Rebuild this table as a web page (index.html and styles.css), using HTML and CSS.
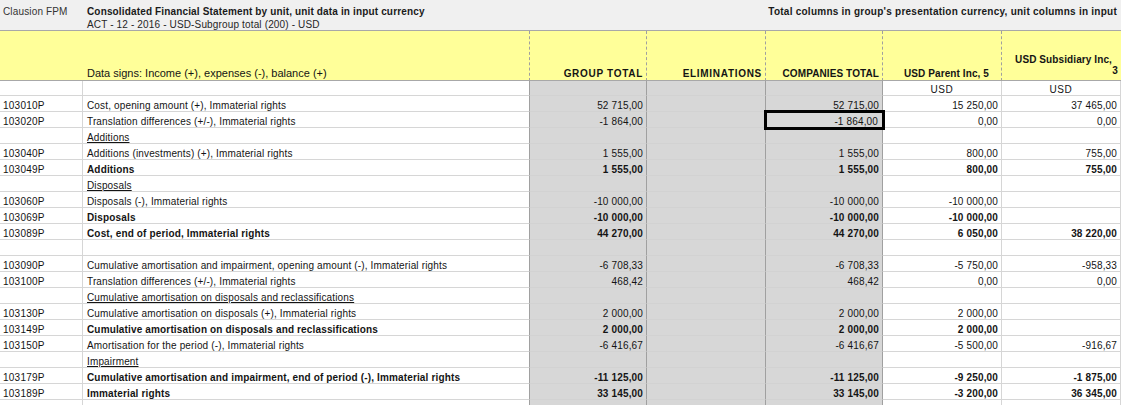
FILE: index.html
```html
<!DOCTYPE html>
<html lang="en">
<head>
<meta charset="utf-8">
<title>Consolidated Financial Statement by unit</title>
<link rel="stylesheet" href="styles.css">
</head>
<body>
<div class="sheet">
  <div class="top">
    <div class="top-code">Clausion FPM</div>
    <div class="top-title">
      <div class="title-main">Consolidated Financial Statement by unit, unit data in input currency</div>
      <div class="title-sub">ACT - 12 - 2016 - USD-Subgroup total (200) - USD</div>
    </div>
    <div class="top-note">Total columns in group's presentation currency, unit columns in input</div>
  </div>

  <div class="row head">
    <div class="c hc hcode"></div>
    <div class="c hc hdesc"><span class="signs">Data signs: Income (+), expenses (-), balance (+)</span></div>
    <div class="c hc hnum wide">GROUP TOTAL</div>
    <div class="c hc hnum wide">ELIMINATIONS</div>
    <div class="c hc hnum">COMPANIES TOTAL</div>
    <div class="c hc hnum parent">USD Parent Inc, 5</div>
    <div class="c hc hnum sub last"><span class="sub-l1">USD Subsidiary Inc,</span><span>3</span></div>
  </div>

  <div class="row cur">
    <div class="c code"></div>
    <div class="c desc"></div>
    <div class="c g"></div>
    <div class="c g"></div>
    <div class="c g"></div>
    <div class="c ctr">USD</div>
    <div class="c ctr">USD</div>
  </div>

  <div class="row"><div class="c code">103010P</div><div class="c desc">Cost, opening amount (+), Immaterial rights</div><div class="c num g">52 715,00</div><div class="c num g"></div><div class="c num g">52 715,00</div><div class="c num">15 250,00</div><div class="c num">37 465,00</div></div>
  <div class="row"><div class="c code">103020P</div><div class="c desc">Translation differences (+/-), Immaterial rights</div><div class="c num g">-1 864,00</div><div class="c num g"></div><div class="c num g sel">-1 864,00</div><div class="c num">0,00</div><div class="c num">0,00</div></div>
  <div class="row"><div class="c code"></div><div class="c desc"><span class="u">Additions</span></div><div class="c num g"></div><div class="c num g"></div><div class="c num g"></div><div class="c num"></div><div class="c num"></div></div>
  <div class="row"><div class="c code">103040P</div><div class="c desc">Additions (investments) (+), Immaterial rights</div><div class="c num g">1 555,00</div><div class="c num g"></div><div class="c num g">1 555,00</div><div class="c num">800,00</div><div class="c num">755,00</div></div>
  <div class="row b"><div class="c code">103049P</div><div class="c desc">Additions</div><div class="c num g">1 555,00</div><div class="c num g"></div><div class="c num g">1 555,00</div><div class="c num">800,00</div><div class="c num">755,00</div></div>
  <div class="row"><div class="c code"></div><div class="c desc"><span class="u">Disposals</span></div><div class="c num g"></div><div class="c num g"></div><div class="c num g"></div><div class="c num"></div><div class="c num"></div></div>
  <div class="row"><div class="c code">103060P</div><div class="c desc">Disposals (-), Immaterial rights</div><div class="c num g">-10 000,00</div><div class="c num g"></div><div class="c num g">-10 000,00</div><div class="c num">-10 000,00</div><div class="c num"></div></div>
  <div class="row b"><div class="c code">103069P</div><div class="c desc">Disposals</div><div class="c num g">-10 000,00</div><div class="c num g"></div><div class="c num g">-10 000,00</div><div class="c num">-10 000,00</div><div class="c num"></div></div>
  <div class="row b"><div class="c code">103089P</div><div class="c desc">Cost, end of period, Immaterial rights</div><div class="c num g">44 270,00</div><div class="c num g"></div><div class="c num g">44 270,00</div><div class="c num">6 050,00</div><div class="c num">38 220,00</div></div>
  <div class="row"><div class="c code"></div><div class="c desc"></div><div class="c num g"></div><div class="c num g"></div><div class="c num g"></div><div class="c num"></div><div class="c num"></div></div>
  <div class="row"><div class="c code">103090P</div><div class="c desc">Cumulative amortisation and impairment, opening amount (-), Immaterial rights</div><div class="c num g">-6 708,33</div><div class="c num g"></div><div class="c num g">-6 708,33</div><div class="c num">-5 750,00</div><div class="c num">-958,33</div></div>
  <div class="row"><div class="c code">103100P</div><div class="c desc">Translation differences (+/-), Immaterial rights</div><div class="c num g">468,42</div><div class="c num g"></div><div class="c num g">468,42</div><div class="c num">0,00</div><div class="c num">0,00</div></div>
  <div class="row"><div class="c code"></div><div class="c desc"><span class="u">Cumulative amortisation on disposals and reclassifications</span></div><div class="c num g"></div><div class="c num g"></div><div class="c num g"></div><div class="c num"></div><div class="c num"></div></div>
  <div class="row"><div class="c code">103130P</div><div class="c desc">Cumulative amortisation on disposals (+), Immaterial rights</div><div class="c num g">2 000,00</div><div class="c num g"></div><div class="c num g">2 000,00</div><div class="c num">2 000,00</div><div class="c num"></div></div>
  <div class="row b"><div class="c code">103149P</div><div class="c desc">Cumulative amortisation on disposals and reclassifications</div><div class="c num g">2 000,00</div><div class="c num g"></div><div class="c num g">2 000,00</div><div class="c num">2 000,00</div><div class="c num"></div></div>
  <div class="row"><div class="c code">103150P</div><div class="c desc">Amortisation for the period (-), Immaterial rights</div><div class="c num g">-6 416,67</div><div class="c num g"></div><div class="c num g">-6 416,67</div><div class="c num">-5 500,00</div><div class="c num">-916,67</div></div>
  <div class="row"><div class="c code"></div><div class="c desc"><span class="u">Impairment</span></div><div class="c num g"></div><div class="c num g"></div><div class="c num g"></div><div class="c num"></div><div class="c num"></div></div>
  <div class="row b"><div class="c code">103179P</div><div class="c desc">Cumulative amortisation and impairment, end of period (-), Immaterial rights</div><div class="c num g">-11 125,00</div><div class="c num g"></div><div class="c num g">-11 125,00</div><div class="c num">-9 250,00</div><div class="c num">-1 875,00</div></div>
  <div class="row b"><div class="c code">103189P</div><div class="c desc">Immaterial rights</div><div class="c num g">33 145,00</div><div class="c num g"></div><div class="c num g">33 145,00</div><div class="c num">-3 200,00</div><div class="c num">36 345,00</div></div>
  <div class="row"><div class="c code"></div><div class="c desc"></div><div class="c num g"></div><div class="c num g"></div><div class="c num g"></div><div class="c num"></div><div class="c num"></div></div>
</div>
</body>
</html>
```

FILE: styles.css
```css
html, body {
  margin: 0;
  padding: 0;
  background: #ffffff;
}

body {
  font-family: "Liberation Sans", Arial, sans-serif;
  color: #141414;
  overflow: hidden;
}

.sheet {
  width: 1121px;
}

/* top title bar */
.top {
  display: flex;
  height: 31px;
  box-sizing: border-box;
  background: #f0f0f0;
  border-bottom: 1px solid #a8a8a8;
  font-size: 10px;
  letter-spacing: 0.15px;
  line-height: 13px;
}

.top-code {
  width: 83px;
  box-sizing: border-box;
  padding: 5px 0 0 3px;
  color: #333333;
}

.top-title {
  padding: 5px 0 0 4px;
}

.title-main {
  font-weight: bold;
  color: #1a1a1a;
}

.title-sub {
  color: #262626;
}

.top-note {
  margin-left: auto;
  padding: 5px 4px 0 0;
  font-weight: bold;
  letter-spacing: 0.25px;
  color: #1a1a1a;
}

/* grid rows */
.row {
  display: grid;
  grid-template-columns: 83px 447px 117px 119px 117px 119px 119px;
  height: 16px;
}

.c {
  box-sizing: border-box;
  height: 100%;
  display: flex;
  align-items: flex-end;
  padding: 0 3px;
  border-right: 1px solid #d6d6d6;
  border-bottom: 1px solid #d6d6d6;
  font-size: 10px;
  line-height: 10px;
  letter-spacing: 0.15px;
  white-space: nowrap;
}

.code {
  padding-left: 3px;
  letter-spacing: 0.25px;
}

.desc {
  padding-left: 4px;
  border-right-color: #a0a0a0;
}

.num {
  justify-content: flex-end;
}

.ctr {
  justify-content: center;
  letter-spacing: 0.6px;
}

.g {
  background: #d7d7d7;
  border-right-color: #a0a0a0;
  border-bottom-color: #d2d2d2;
}

.b .desc,
.b .num {
  font-weight: bold;
}

.u {
  text-decoration: underline;
}

.sel {
  position: relative;
  z-index: 1;
  outline: 3px solid #000000;
  outline-offset: -1px;
  padding-right: 4px;
}

/* yellow header row */
.head {
  height: 50px;
}

.hc {
  background: #ffff99;
  border-bottom: 1px solid #a8a8a8;
  border-right: 1px dashed #a0a0a0;
  font-weight: bold;
  padding-bottom: 1px;
  line-height: 11px;
}

.hcode {
  border-right: none;
}

.hdesc {
  font-weight: normal;
  padding-left: 4px;
}

.signs {
  font-size: 11px;
  letter-spacing: 0;
}

.hnum {
  justify-content: flex-end;
  text-align: right;
  letter-spacing: 0.1px;
}

.wide {
  letter-spacing: 0.7px;
}

.parent {
  padding-right: 12px;
}

.sub {
  flex-direction: column;
  align-items: flex-end;
  justify-content: flex-end;
  padding-bottom: 4px;
}

.sub-l1 {
  padding-right: 6px;
}

.last {
  border-right: none;
}

/* currency row */
.cur {
  height: 15px;
}

.cur .c {
  padding-bottom: 0;
}
```
